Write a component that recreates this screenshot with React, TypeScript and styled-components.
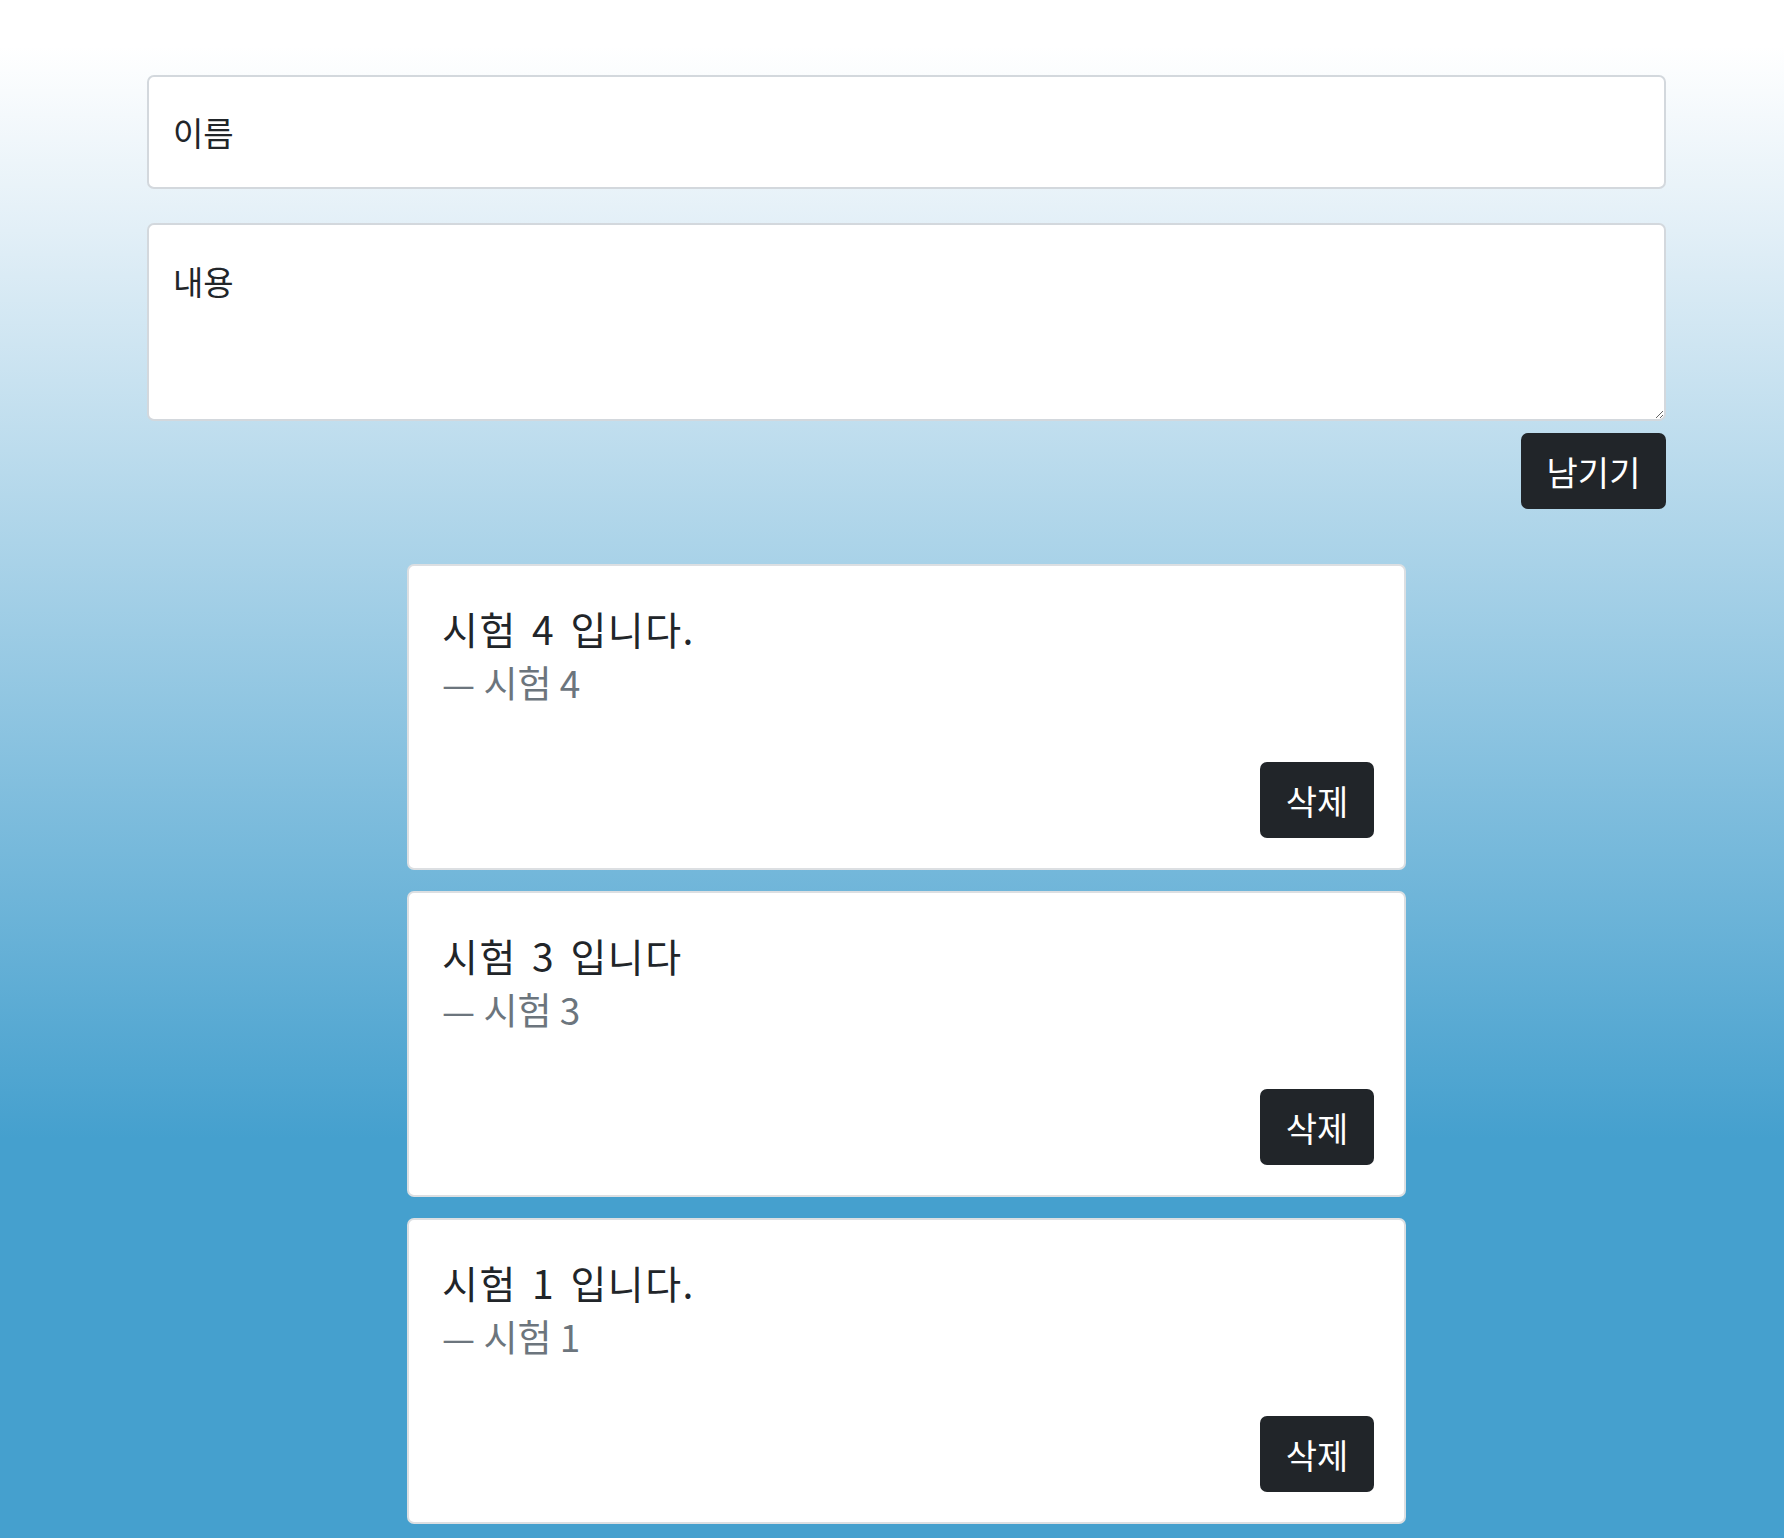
import { styled, createGlobalStyle } from 'styled-components';

type Entry = {
	id: number;
	message: string;
	author: string;
};

const entries: Entry[] = [
	{ id: 4, message: '시험 4 입니다.', author: '시험 4' },
	{ id: 3, message: '시험 3 입니다', author: '시험 3' },
	{ id: 1, message: '시험 1 입니다.', author: '시험 1' }
];

const GlobalStyle = createGlobalStyle`
	html, body {
		margin: 0;
		padding: 0;
	}

	body {
		min-height: 100vh;
		font-family: "Noto Sans CJK KR", "Noto Sans", sans-serif;
		color: #212529;
		background: linear-gradient(to bottom, #ffffff 3%, #e2eff7 15%, #45a0ce 74%, #45a0ce 100%);
		background-attachment: fixed;
	}

	* {
		box-sizing: border-box;
	}
`;

const Page = styled.main`
	padding: 75px 118px 17px 147px;
`;

const GuestForm = styled.form`
	display: flex;
	flex-flow: column nowrap;
	align-items: stretch;
`;

const NameField = styled.input`
	display: block;
	width: 100%;
	height: 114px;
	padding: 0 24px;
	font-family: inherit;
	font-size: 33px;
	line-height: 1.5;
	color: #212529;
	background: #fff;
	border: 2px solid #d3d8dd;
	border-radius: 7px;
	outline: none;

	&::placeholder {
		color: #212529;
		opacity: 1;
	}
`;

const MessageField = styled.textarea`
	display: block;
	width: 100%;
	height: 198px;
	margin-top: 34px;
	padding: 32px 24px 24px;
	font-family: inherit;
	font-size: 33px;
	line-height: 1.5;
	color: #212529;
	background: #fff;
	border: 2px solid #d3d8dd;
	border-radius: 7px;
	outline: none;
	resize: vertical;

	&::placeholder {
		color: #212529;
		opacity: 1;
	}
`;

const FormActions = styled.div`
	display: flex;
	justify-content: flex-end;
	margin-top: 12px;
`;

const DarkButton = styled.button<{ $width: number }>`
	width: ${(p) => p.$width}px;
	height: 76px;
	padding: 0;
	font-family: inherit;
	font-size: 34px;
	color: #fff;
	background: #212529;
	border: none;
	border-radius: 7px;
	cursor: pointer;
`;

const EntryList = styled.section`
	display: flex;
	flex-flow: column nowrap;
	gap: 21px;
	width: 999px;
	margin: 55px auto 0;
`;

const EntryCard = styled.article`
	display: flex;
	flex-flow: column nowrap;
	height: 306px;
	padding: 35px 30px 30px 33px;
	background: #fff;
	border: 2px solid #dcdfe2;
	border-radius: 7px;
`;

const Message = styled.p`
	margin: 0;
	font-size: 39px;
	line-height: 54px;
	letter-spacing: 1.5px;
	word-spacing: 5px;
	color: #212529;
`;

const Author = styled.p`
	margin: 3px 0 0;
	font-size: 37px;
	line-height: 48px;
	color: #6c757d;
`;

const CardActions = styled.div`
	display: flex;
	justify-content: flex-end;
	margin-top: auto;
`;

export default function App() {
	return (
		<>
			<GlobalStyle />
			<Page>
				<GuestForm onSubmit={(e) => e.preventDefault()}>
					<NameField type="text" placeholder="이름" />
					<MessageField placeholder="내용" />
					<FormActions>
						<DarkButton type="submit" $width={145}>
							남기기
						</DarkButton>
					</FormActions>
				</GuestForm>
				<EntryList>
					{entries.map((entry) => (
						<EntryCard key={entry.id}>
							<Message>{entry.message}</Message>
							<Author>— {entry.author}</Author>
							<CardActions>
								<DarkButton type="button" $width={114}>
									삭제
								</DarkButton>
							</CardActions>
						</EntryCard>
					))}
				</EntryList>
			</Page>
		</>
	);
}
